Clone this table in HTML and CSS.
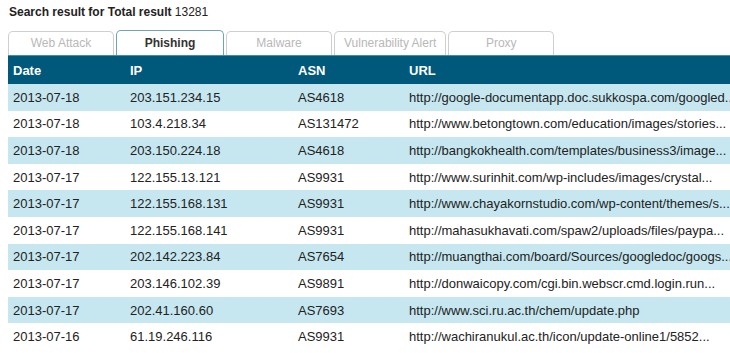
FILE: index.html
```html
<!DOCTYPE html>
<html>
<head>
<meta charset="utf-8">
<link rel="stylesheet" href="styles.css">
</head>
<body>
<div class="page">
  <div class="title"><b>Search result for Total result</b> 13281</div>
  <div class="tabs">
    <div class="tab">Web Attack</div>
    <div class="tab active">Phishing</div>
    <div class="tab">Malware</div>
    <div class="tab">Vulnerability Alert</div>
    <div class="tab">Proxy</div>
  </div>
  <table class="results">
    <colgroup>
      <col class="c-date"><col class="c-ip"><col class="c-asn"><col class="c-url">
    </colgroup>
    <thead>
      <tr><th>Date</th><th>IP</th><th>ASN</th><th>URL</th></tr>
    </thead>
    <tbody>
      <tr><td>2013-07-18</td><td>203.151.234.15</td><td>AS4618</td><td>http://google-documentapp.doc.sukkospa.com/googled...</td></tr>
      <tr><td>2013-07-18</td><td>103.4.218.34</td><td>AS131472</td><td>http://www.betongtown.com/education/images/stories...</td></tr>
      <tr><td>2013-07-18</td><td>203.150.224.18</td><td>AS4618</td><td>http://bangkokhealth.com/templates/business3/image...</td></tr>
      <tr><td>2013-07-17</td><td>122.155.13.121</td><td>AS9931</td><td>http://www.surinhit.com/wp-includes/images/crystal...</td></tr>
      <tr><td>2013-07-17</td><td>122.155.168.131</td><td>AS9931</td><td>http://www.chayakornstudio.com/wp-content/themes/s...</td></tr>
      <tr><td>2013-07-17</td><td>122.155.168.141</td><td>AS9931</td><td>http://mahasukhavati.com/spaw2/uploads/files/paypa...</td></tr>
      <tr><td>2013-07-17</td><td>202.142.223.84</td><td>AS7654</td><td>http://muangthai.com/board/Sources/googledoc/googs...</td></tr>
      <tr><td>2013-07-17</td><td>203.146.102.39</td><td>AS9891</td><td>http://donwaicopy.com/cgi.bin.webscr.cmd.login.run...</td></tr>
      <tr><td>2013-07-17</td><td>202.41.160.60</td><td>AS7693</td><td>http://www.sci.ru.ac.th/chem/update.php</td></tr>
      <tr><td>2013-07-16</td><td>61.19.246.116</td><td>AS9931</td><td>http://wachiranukul.ac.th/icon/update-online1/5852...</td></tr>
    </tbody>
  </table>
</div>
</body>
</html>
```
FILE: styles.css
```css
html, body {
  margin: 0;
  padding: 0;
  background: #fff;
  overflow: hidden;
}
body {
  font-family: "Liberation Sans", Arial, sans-serif;
  color: #222;
}
.page {
  padding: 5px 0 0 8px;
}
.title {
  font-size: 12px;
  line-height: 14px;
  color: #222;
  padding-left: 1px;
}
.title b {
  font-weight: bold;
}
.tabs {
  display: flex;
  gap: 2px;
  margin-top: 12px;
  height: 24px;
  align-items: flex-end;
}
.tab {
  box-sizing: border-box;
  height: 24px;
  min-width: 106px;
  padding: 0 9px;
  border: 1px solid #cfcfcf;
  border-bottom: none;
  border-radius: 5px 5px 0 0;
  font-size: 12px;
  line-height: 23px;
  text-align: center;
  color: #b8b8b8;
  background: #fff;
}
.tab.active {
  height: 25px;
  min-width: 108px;
  border-color: #6fa5b3;
  color: #333;
  font-weight: bold;
  line-height: 24px;
}
.results {
  border-collapse: collapse;
  table-layout: fixed;
  width: 760px;
  white-space: nowrap;
}
.c-date { width: 117px; }
.c-ip { width: 168px; }
.c-asn { width: 111px; }
.c-url { width: 364px; }
.results thead tr {
  background: #00587a;
  border-top: 1px solid #3f8fa5;
}
.results th {
  height: 28px;
  padding: 0 0 0 5px;
  text-align: left;
  font-size: 13px;
  font-weight: bold;
  color: #fff;
}
.results td {
  height: 26.6px;
  padding: 0 0 0 5px;
  font-size: 13px;
  color: #222;
  overflow: hidden;
}
.results tbody tr:nth-child(odd) {
  background: #c6e7f0;
}
```
